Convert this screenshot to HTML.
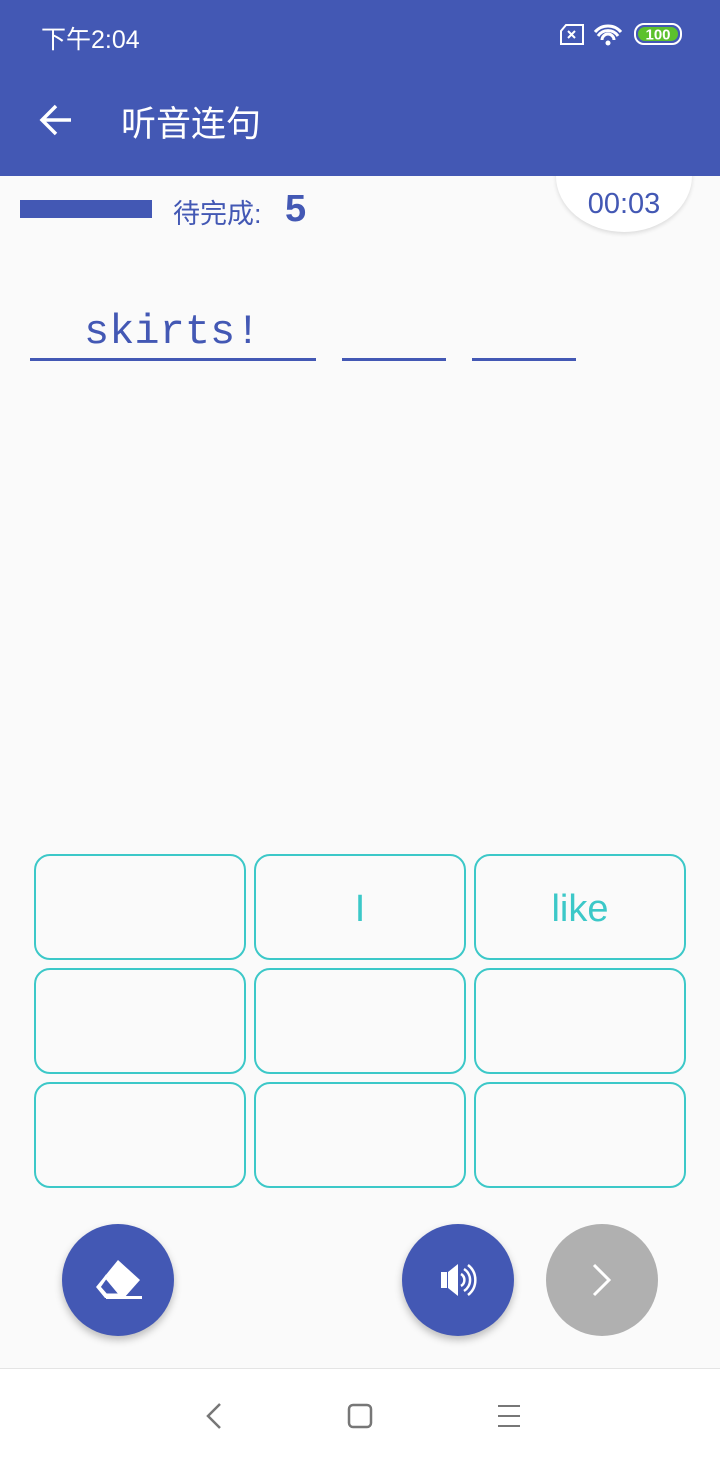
<!DOCTYPE html>
<html><head><meta charset="utf-8"><style>
*{margin:0;padding:0;box-sizing:border-box}
body{width:720px;height:1464px;background:#fafafa;font-family:"Liberation Sans","Noto Sans CJK SC",sans-serif;position:relative;overflow:hidden}
.hdr{position:absolute;left:0;top:0;width:720px;height:176px;background:#4358b4;color:#fff;z-index:2}
.abs{position:absolute}
.box{position:absolute;width:212px;height:106px;border:2px solid #3cc8c8;border-radius:16px;color:#3cc8c8;font-size:38px;text-align:center;line-height:106px}
.fab{position:absolute;width:112px;height:112px;border-radius:50%;background:#4358b4;top:1224px;box-shadow:0 4px 8px rgba(0,0,0,.25)}
.ul{position:absolute;top:358px;height:3px;background:#4358b4}
</style></head><body>
<div class="abs" style="left:556px;top:120px;width:136px;height:112px;border-radius:0 0 68px 68px/0 0 56px 56px;background:#fff;box-shadow:0 2px 4px rgba(0,0,0,.12)"></div>
<div class="hdr">
 <div class="abs" style="left:41px;top:20px;font-size:25px">下午2:04</div>
 <svg class="abs" style="left:558px;top:22px" width="128" height="26" viewBox="0 0 128 26">
  <path d="M8 3h17v19H3V9z" fill="none" stroke="#fff" stroke-width="2"/>
  <path d="M10 9l7 7M17 9l-7 7" stroke="#fff" stroke-width="2"/>
  <path d="M37 10a17 17 0 0 1 26 0M40 14a12 12 0 0 1 20 0M44 18a6 6 0 0 1 12 0" fill="none" stroke="#fff" stroke-width="3"/>
  <circle cx="50" cy="21" r="2.5" fill="#fff"/>
  <rect x="77" y="2" width="46" height="20" rx="9" fill="none" stroke="#fff" stroke-width="2"/>
  <rect x="80" y="5" width="40" height="14" rx="7" fill="#5cc12c"/>
  <text x="100" y="17.5" font-size="15" font-weight="bold" fill="#fff" text-anchor="middle" font-family="Liberation Sans">100</text>
 </svg>
 <svg class="abs" style="left:38px;top:102px" width="36" height="36" viewBox="0 0 36 36"><path d="M33 18H5M18 4L4 18l14 14" fill="none" stroke="#fff" stroke-width="3.5"/></svg>
 <div class="abs" style="left:121px;top:96px;font-size:35px">听音连句</div>
</div>
<div class="abs" style="left:556px;top:188px;width:136px;text-align:center;font-size:29px;color:#4358b4">00:03</div>
<div class="abs" style="left:20px;top:200px;width:132px;height:18px;background:#4358b4"></div>
<div class="abs" style="left:173px;top:192px;font-size:27px;color:#4358b4">待完成:</div>
<div class="abs" style="left:285px;top:188px;font-size:38px;font-weight:bold;color:#4358b4">5</div>
<div class="abs" style="left:84px;top:308px;font-family:'Liberation Mono',monospace;font-size:42px;color:#4358b4">skirts!</div>
<div class="ul" style="left:30px;width:286px"></div>
<div class="ul" style="left:342px;width:104px"></div>
<div class="ul" style="left:472px;width:104px"></div>
<div class="box" style="left:34px;top:854px"></div>
<div class="box" style="left:254px;top:854px">I</div>
<div class="box" style="left:474px;top:854px">like</div>
<div class="box" style="left:34px;top:968px"></div>
<div class="box" style="left:254px;top:968px"></div>
<div class="box" style="left:474px;top:968px"></div>
<div class="box" style="left:34px;top:1082px"></div>
<div class="box" style="left:254px;top:1082px"></div>
<div class="box" style="left:474px;top:1082px"></div>
<div class="fab" style="left:62px"><svg width="112" height="112" viewBox="0 0 112 112"><path d="M56 36l22 20-16 18H43l-9-11z" fill="#fff"/><path d="M45 52l-9 11 8 9h16z" fill="#4358b4"/><path d="M44 53l-7 10 7 8h15z" fill="none" stroke="#fff" stroke-width="3"/><rect x="44" y="72" width="36" height="3" fill="#fff"/></svg></div>
<div class="fab" style="left:402px"><svg width="112" height="112" viewBox="0 0 112 112"><rect x="39" y="48" width="6" height="16" fill="#fff"/><path d="M46 48l10-8v32l-10-8z" fill="#fff"/><path d="M59 50a7 7 0 0 1 0 12M62 45a13 13 0 0 1 0 22M66 41a19 19 0 0 1 0 30" fill="none" stroke="#fff" stroke-width="2.5"/></svg></div>
<div class="fab" style="left:546px;background:#b0b0b0;box-shadow:none"><svg width="112" height="112" viewBox="0 0 112 112"><path d="M48 41l15 15-15 15" fill="none" stroke="#fff" stroke-width="3"/></svg></div>
<div class="abs" style="left:0;top:1368px;width:720px;height:96px;background:#fff;border-top:1px solid #e4e4e4"></div>
<svg class="abs" style="left:0;top:1396px" width="720" height="40"><path d="M220 8l-12 12 12 12" fill="none" stroke="#777" stroke-width="2.5"/><rect x="349" y="9" width="22" height="22" rx="4" fill="none" stroke="#777" stroke-width="2.5"/><path d="M498 10h22M498 20h22M498 30h22" stroke="#777" stroke-width="2"/></svg>
</body></html>
